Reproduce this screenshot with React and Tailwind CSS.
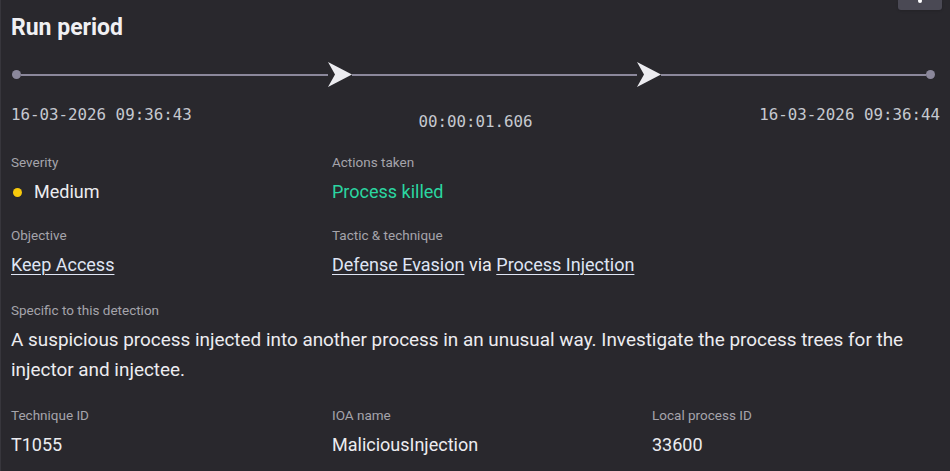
import React from 'react';

const Arrow = () => (
  <svg width="24" height="25" viewBox="0 0 24 25" className="shrink-0">
    <polygon points="0,0 24,12.5 0,25 7,12.5" fill="#ececf0" />
  </svg>
);

const Field = ({ label, children }) => (
  <div>
    <div className="text-[13.5px] leading-[14px] text-[#a5a4ab]">{label}</div>
    <div className="mt-[10px] text-[18px] leading-[26px] text-[#ececf0]">{children}</div>
  </div>
);

const Link = ({ children }) => (
  <a href="#" className="text-[#dfe5f4] underline underline-offset-[3px] decoration-1">
    {children}
  </a>
);

export default function App() {
  return (
    <div
      className="relative w-[950px] h-[471px] overflow-hidden bg-[#29282d] border-l border-[#37363c] pl-[10px] pr-[10px] pt-[14px]"
      style={{ fontFamily: 'Roboto, "Liberation Sans", sans-serif' }}
    >
      {/* partially visible action button */}
      <div className="absolute top-0 right-[8px] w-[44px] h-[10px] bg-[#4a4954] rounded-b-[3px] shadow flex justify-center">
        <div className="w-[4px] h-[4px] rounded-full bg-white -mt-[1px]"></div>
      </div>

      <h2 className="text-[23px] leading-7 font-bold text-[#f0f0f3]">Run period</h2>

      {/* Timeline */}
      <div className="mt-[20px] flex items-center h-[25px] pl-[1px] pr-[5px]">
        <div className="w-[9px] h-[9px] rounded-full bg-[#8b889b] shrink-0"></div>
        <div className="h-[2px] bg-[#8b889b] w-[307px]"></div>
        <Arrow />
        <div className="h-[2px] bg-[#8b889b] w-[285px]"></div>
        <Arrow />
        <div className="h-[2px] bg-[#8b889b] flex-1"></div>
        <div className="w-[9px] h-[9px] rounded-full bg-[#8b889b] shrink-0"></div>
      </div>

      {/* Timestamps */}
      <div
        className="mt-[18px] flex items-start justify-between text-[15.8px] leading-5 text-[#c6c9d0]"
        style={{ fontFamily: '"DejaVu Sans Mono", "Liberation Mono", monospace' }}
      >
        <span>16-03-2026 09:36:43</span>
        <span className="mt-[7px]">00:00:01.606</span>
        <span>16-03-2026 09:36:44</span>
      </div>

      {/* Details */}
      <div className="mt-[23px] grid grid-cols-[321px_320px_1fr] gap-y-[23px]">
        <Field label="Severity">
          <span className="flex items-center gap-[12px]">
            <span className="ml-[2px] w-[9px] h-[9px] rounded-full bg-[#f7c90c]"></span>
            Medium
          </span>
        </Field>
        <Field label="Actions taken">
          <span className="text-[#2bd6a1]">Process killed</span>
        </Field>
        <div></div>

        <Field label="Objective">
          <Link>Keep Access</Link>
        </Field>
        <Field label="Tactic &amp; technique">
          <Link>Defense Evasion</Link> via <Link>Process Injection</Link>
        </Field>
        <div></div>

        <div className="col-span-3 mt-[2px]">
          <div className="text-[13.5px] leading-[14px] text-[#a5a4ab]">Specific to this detection</div>
          <p className="mt-[8px] text-[18.9px] leading-[30px] text-[#ececf0]">
            A suspicious process injected into another process in an unusual way. Investigate the process trees for the injector and injectee.
          </p>
        </div>

        <Field label="Technique ID">T1055</Field>
        <Field label="IOA name">MaliciousInjection</Field>
        <Field label="Local process ID">33600</Field>
      </div>
    </div>
  );
}
